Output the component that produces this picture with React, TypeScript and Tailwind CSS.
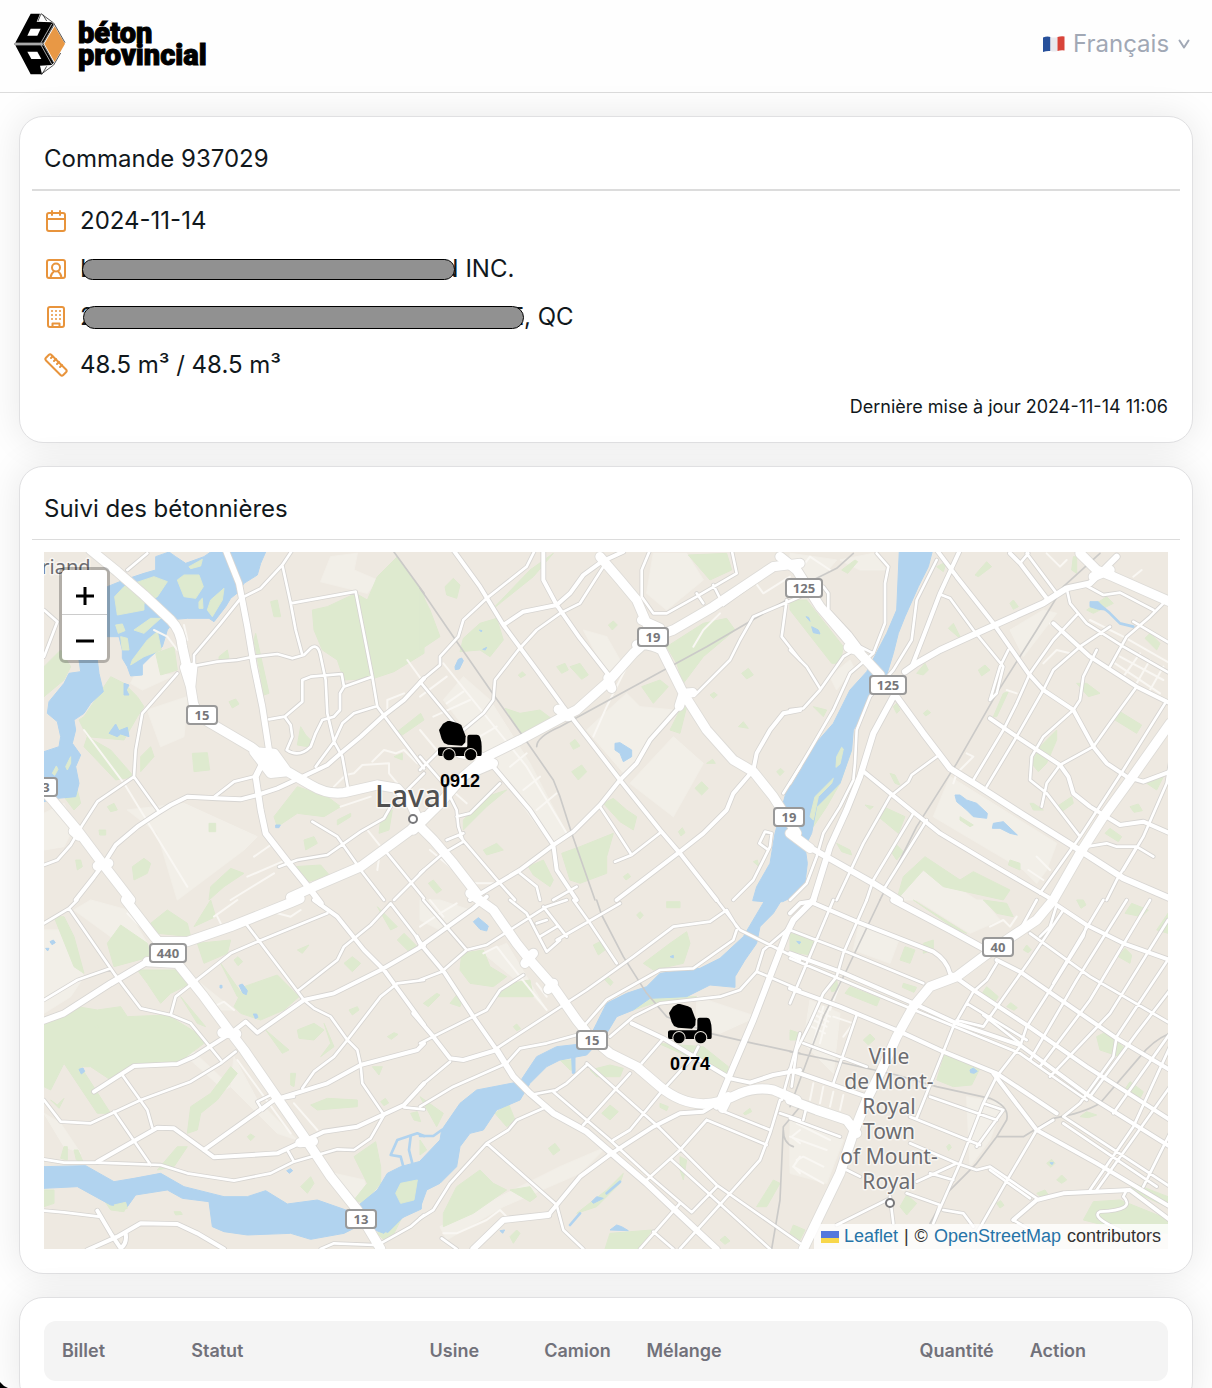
import React from "react";

type Tile = {
  at: string;
  light?: string;
  green: string;
  water?: string;
  islands?: string;
  creek?: string;
  rail?: string;
  minor?: string;
  street: string;
  avenue: string;
  primary?: string;
  motorway?: string;
};

const tiles: Tile[] = [
  {
    at: "translate(44 550) scale(0.33333)",
    light:
      "M310 480L430 440L420 560L350 590Z M250 780L420 760L640 860L600 900L400 1050L340 850Z M860 20L940 10L930 60L1000 90L970 130L830 95Z M0 790L60 760L90 830L60 890L0 900Z M300 320L340 310L350 375L400 372L295 420L260 400Z",
    green:
      "M805 180L850 170L935 130L970 150L1000 80L1060 20L1140 130L1140 310L1050 365L990 385L900 390L880 330L835 300L810 240Z M120 500L160 440L200 380L240 400L280 440L300 470L280 500L240 570L130 560L105 510Z M130 560L200 600L270 680L215 690L120 590Z M445 610L490 608L497 660L450 665Z M690 800L760 710L850 740L890 770L840 800L760 790L700 830Z M495 1050L500 1010L560 955L600 970L540 1010Z M265 950L300 925L320 940L310 970L270 990Z M750 950L830 945L860 980L790 995Z M60 740l40-20 10 40-20 20z M290 620l30-30 10 30-40 45z M1060 545L1130 490L1140 510L1075 555Z M495 820h20v25h-20z M335 310L390 290L400 360L350 375Z M635 250L675 430L660 435L630 270Z M680 155L700 150L710 200L690 200Z M555 455l20-8 10 15-20 12z M525 320l25-20 5 25-30 5z M1010 810l35-30-10 60-30 10z M880 810L920 790L920 800L880 825Z M190 770l20-10 10 20-20 5z M0 350L50 300L80 350L60 390L0 440Z M770 530l15 25 20 20-15 15-30-5z M165 840l20 0 0 15-18 0z M95 930l15 0 5 20-15 10z M1050 620l25-10 0 20z M780 870l30-10 10 20-35 20z",
    water:
      "M190 110L240 90L300 70L335 60L335 20L375 6L395 20L425 40L480 20L500 6L665 6L650 40L640 75L600 100L585 125L560 145L545 170L510 215L495 205L430 205L395 208L370 240L355 290L320 320L295 345L295 375L260 378L250 350L235 325L235 300L225 260L190 260Z M105 330L160 330L165 370L178 425L140 460L120 490L90 510L95 540L85 580L110 615L95 650L105 700L95 740L40 745L0 755L0 605L45 590L50 560L40 515L10 490L15 455L60 400L75 370L110 365Z M195 550l20-28 10 20 25-10 5 28-25-8-10 8z M240 400l15 5-8 15 8 15-15 0z M695 825l14 0-4 8-10 0z",
    islands:
      "M400 90L420 75L465 75L478 110L455 145L420 140Z M435 50l40-22-5 20-30 8z M490 180L500 150L540 115L535 150L505 200Z M240 110L330 80L370 95L340 140L300 160L300 180L220 195L212 140Z M270 240L320 205L350 205L300 250Z M230 260l20 5 5 35-20 0z M265 330L310 270L340 245L352 300L300 320L260 345Z M215 225l20-3 8 20-20 8z M65 650l15-30 0 20-10 20z M465 155l10-10 2 30-12 0z M25 670l12-22 5 10-10 18z",
    rail: "M1050 6L1140 130",
    minor:
      "M120 540L240 700L430 1010 M630 920L680 885 M610 980L715 935 M560 1050L690 970 M970 840L1010 890L1000 960 M1030 480L1030 450L1080 430 M1090 330L1130 385 M870 710L905 675L930 670L955 645L1035 640L1035 670L1060 700 M985 635L1020 600L1055 610L1080 600L1120 640 M890 770L980 740 M420 225L430 270 M330 240L370 260L400 300",
    street:
      "M745 0L715 45L650 115L590 145L530 220L450 315L450 350 M450 348L520 335L580 330L630 320L700 312L745 325L780 315L800 295Q820 280 828 310L845 390L850 490L870 575L895 620L912 715 M715 45L740 160L755 240L775 315 M740 160L935 125L985 380L1000 470L1060 550L1140 655 M985 380L900 410L888 430L888 480L870 500L835 510L815 550L800 590Q765 625 728 600L745 560L740 525L722 500L675 508 M722 500L775 455L775 390L800 380L893 372L900 410 M1000 468L930 490L895 520L870 575L815 650 M400 370L295 490L275 600L270 680L160 755L115 825L80 885L40 930L0 945 M270 680L345 785 M512 740L570 695L630 680 M705 950L760 930L850 915L900 880L950 845L1020 805L1040 770 M805 815L880 860L940 945 M950 960L1020 1050 M1030 910L1140 1045 M1140 960L1050 1050 M0 180L40 215L0 320 M250 60L310 10 M1140 670L1090 720",
    avenue:
      "M1140 385L1080 450L1015 500L950 560L890 610L850 645L765 685L700 715L640 735L590 748L520 745L430 740L380 765L340 790L280 830L215 885L180 940L150 980L95 1050",
    primary:
      "M545 0L585 100L610 230L630 350L655 470L675 600L635 680L650 780L665 850L735 940L800 1020L830 1060",
    motorway:
      "M140 0L220 65L300 135L380 210Q410 240 415 290L435 380L448 460Q460 500 500 520L620 590L670 630L740 670L800 705Q850 735 900 728L1000 705L1060 715L1100 760L1128 820 M630 605L680 670L730 665L690 610Z M422 352L440 410L446 352 M-30 690L20 745L100 840L175 940L260 1050 M88 844L104 858 M160 948L194 940 M740 1042L810 1010L950 950L1100 840L1140 800",
  },
  {
    at: "translate(420 550) scale(0.33333)",
    light:
      "M700 10L800 10L850 90L740 180L680 130Z M500 540L620 430L660 470L760 480L620 680Z M630 700L760 560L850 640L760 800Z M490 240L560 260L600 330L560 370Z M130 380L210 450L330 640L440 850L390 880L200 620L70 450Z",
    green:
      "M0 120L30 180L60 260L0 300Z M75 110l25-25 20 20-10 40-30-10z M130 265L180 220L230 205L250 270L210 320L180 300L120 305Z M255 475L300 490L360 480L400 510L310 560Z M410 350l25-10 10 20-20 10z M450 350L480 340L505 375L485 388Z M740 290L850 220L920 205L945 240L850 320L790 400L770 340Z M665 410L720 390L745 410L700 460Z M805 15L920 10L935 60L870 90Z M750 540l30-60 20-10-20 80z M550 760L580 745L620 780L650 800L640 840L600 815Z M425 910L480 890L580 850L560 920L560 970L480 1000L450 990Z M325 950L370 930L400 990L390 1010L340 975Z M190 900l40-20 20 20-50 15z M130 810L200 740L260 720L200 770L130 840Z M455 665l30-20 15 20-25 25z M825 715l20-20 20 20-20 20z M965 370l20-15 15 20-20 12z M955 530l15-15 15 20z M215 180L330 60L400 10L340 80Z M450 580l15-12 15 20-20 10z M25 1000l15-10 25 30-15 10z M565 225l15-12 12 12-15 15z M870 435l12-8 10 8-12 10z M1070 665l12-10 10 10-12 12z M775 845l12-12 8 15-12 10z M295 375l12-10 10 10-15 8z M860 640l18-12 8 12z M610 980l14-10 8 10-14 10z M1000 935l12-5 5 20z",
    water:
      "M105 350l10-22 10-4 5 8-12 25-12 2z M585 580L600 578L635 600L635 620L610 635L600 610L585 600Z M178 240l8 2-2 4z M188 298l12-6-4 8z",
    rail: "M0 115L100 260L225 440L310 560L400 690L420 740L455 850L525 1050 M350 590Q350 560 420 530L860 290L1100 150",
    minor:
      "M70 340L320 650L440 850 M80 460L130 425 M40 500L150 450 M0 540L50 600 M270 650L320 610 M310 720L360 680 M350 780L410 730 M520 560L560 470L620 350 M30 900L150 1000L220 1000 M0 440L80 380 M110 600L230 530 M1000 90L1030 130L1110 80 M60 690L140 760 M820 290L850 240L900 190",
    street:
      "M345 0L320 50L200 145L130 210L115 260L60 320L60 345L0 395L120 540 M550 50L480 160L420 190L350 240L295 300L225 390L220 450L190 490L130 540 M0 660L60 600 M690 0L665 60L665 140L700 190L740 190L830 140L950 70L935 0 M1100 150L1085 260L1140 330 M540 770L580 830L635 915L725 845 M635 915L585 935 M300 970L350 1010L360 1050 M0 970L70 910L130 875L115 830L110 780L70 700L0 620 M120 860L240 1000L285 1050 M110 800L150 790L240 700 M80 870L130 850 M1140 650L1090 730 M940 1050L1000 990L1050 890L1055 850L1035 845L1018 880L1045 900 M400 1050L470 1010 M830 130L850 160 M880 105L910 165L1000 100 M830 430L930 330L960 270L1000 200L1140 140",
    avenue:
      "M100 0L180 110L250 225L350 360L430 470L500 560L600 690L720 840L780 910L890 1050 M370 0L370 90L410 165L480 265L570 380 M250 225L310 185L410 165L450 130L490 75L545 35L610 5 M1140 480L1090 490L1050 540L1010 610L1000 660L940 730L920 780L850 850L780 905L590 1050 M220 650L330 780L400 885L410 960L470 1050 M150 1050L300 960L400 885L460 845L540 765L600 690L650 640L690 570L770 480",
    motorway:
      "M-20 840L60 760L130 680L200 620L300 570L430 500L470 480L560 400L640 310L690 265L760 240L880 170L1060 50L1140 40 M120 610L180 620L220 640L150 670 M650 285Q690 280 725 300 M665 210L720 235 M540 20L600 90L650 150L680 220L720 290L790 430L860 540L940 630L1000 665L1060 740L1130 850 M778 468L790 430L818 428 M564 384L575 415 M415 478L445 500 M0 830L40 870L100 940L170 1030",
  },
  {
    at: "translate(790 550) scale(0.33333)",
    light:
      "M480 680L800 880L770 960L740 1000L700 960L430 800Z M350 980L420 960L560 1050L330 1050Z M660 240L760 180L800 190L700 320Z M0 10L140 30L80 100L0 50Z M150 30L250 10L290 60L210 60Z M120 380L180 330L190 350L140 420Z",
    green:
      "M0 150L50 150L160 290L150 340L125 340L0 180Z M555 75L590 35L605 50L565 80Z M475 235L490 220L515 270Z M565 360l20-15 15 15-25 18z M975 510L990 485L1055 525L1040 550Z M860 400L890 400L930 430L895 440Z M750 590L800 540L800 570L770 640L745 665L725 640Z M265 800L280 770L345 800L325 850Z M800 770L845 740L850 760L815 785Z M945 850L960 835L995 860L985 875Z M320 1050L340 980L405 920L510 990L550 965L660 1020L640 1050L460 1010L400 960Z M185 600L150 700L110 770L70 830L60 760L110 700L150 680Z M890 180l60-40 20 20-60 30z M1065 265L1080 250L1110 280L1100 300Z M660 930l30 10 0 20-35-15z M70 470L110 480L100 500Z M440 50l30-15-10 30z M380 370l25-30 10 20-15 15z M610 500L640 430L655 425L620 500Z M510 800l40 25-10 5-30-20z M300 900l20-15 20 20-20 25z M140 880l40 20 5 15-30-10z M1070 700l50-20-20 40z M660 160l10-10 15 20-15 8z M400 490l12-10 10 8-15 10z M300 670l15 5 15 30-15-5z M850 20l10 0 0 50-15-10z M155 60l40-30 8 5-30 35z M720 760l10 0 30 20-30 0z M225 765l25 5-10 8z M310 470l10-10 10 20-10 10z M1020 770l25-8 12 20-25 5z",
    water:
      "M328 0L428 0L415 50L385 110L345 200L325 250L310 310L290 375L245 430L220 490L190 540L185 600L150 700L110 740L80 770L65 850L45 890L52 940L45 1000L20 1035L-22 1055L-80 1055L-112 1052L-100 1010L-60 940L-45 850L-10 720L60 600L130 520L180 420L230 365L290 250L320 180Z M495 735L510 735L530 750L560 760L592 790L590 805L550 800L530 780L500 755Z M610 820L640 815L682 855L660 850L630 835L607 835Z M900 155l25 0 20 25-20-2-25-8z M65 230l20 10 5 12-20-4z M48 200l8 2 4 12z",
    islands: "M140 620l15-28 5 5-10 45-12 10z M60 800L75 740L130 685L125 700L85 740L70 810Z",
    creek: "M930 165L960 190L990 220L1030 230",
    rail: "M930 10L820 110L740 240L620 430L500 640L380 830L270 1050 M50 100L140 55L190 10",
    minor:
      "M780 220L820 250 M760 340L800 300L840 310 M490 700L500 670L550 620L530 610 M900 210L1000 260L1140 340 M990 320L1120 390 M975 340L1110 430 M1000 380L1050 310 M1040 400L1080 330 M1080 420L1120 350 M715 960L760 990 M740 920L780 960 M30 60L60 20L120 60 M1030 80L1055 60 M770 10L810 50L830 30 M650 420L680 430",
    street:
      "M455 135L480 145L550 240L640 350L620 430L600 450 M260 10L295 50L285 100L285 220L250 310L180 370L130 480L60 600L0 700 M440 30L380 150L365 270L310 360L240 440L200 540L195 640L190 690L150 770L100 850L80 920L50 1000L0 1050 M300 740L355 695L365 675L440 620 M0 480L40 475L90 420L160 320L210 290L250 310 M0 300L50 350L90 415 M100 110L115 130L115 180L180 250L210 290 M860 195L790 270L720 370L680 460L640 540L550 690 M960 230L870 290L790 360L760 420L680 560L590 710 M920 300L880 380L870 450L850 480L760 560L725 620L720 690L770 730L870 860 M910 590L810 645L770 700L755 770 M830 115L840 160L890 220L1000 290L1140 370 M1140 140L1080 200L1010 260L960 350 M885 105L940 135L990 128L1090 180 M1030 215L1140 280 M1040 410L960 520L910 590 M1125 460L1000 660L870 860L750 1030 M1140 640L1130 700L1060 860L1000 960 M890 890L950 880L980 890L1040 890L1090 920 M370 790L250 990L230 1050 M410 810L280 1020 M300 740L220 880L140 1050 M710 10L800 130 M655 300L630 350L600 450 M1040 890L980 990L950 1050 M690 40L715 10",
    avenue:
      "M440 0L500 80L610 220L715 370L760 420L850 480L910 590L950 640L1010 680L1060 695L1140 665 M510 0L450 130L400 260L365 350 M660 10L690 40L770 145 M215 660L350 770L450 850L600 940L780 1045 M790 220L900 320L1040 410L1140 460 M600 505L680 560L810 645L835 680L850 730L900 770L990 825L1060 815L1140 850",
    primary:
      "M320 440L400 550L480 655L560 705L700 795L860 895L1000 985L1140 1045 M345 365L380 340L450 300L570 245L760 160L830 115L900 100L980 20 M310 440L250 550L210 680L170 780L120 890L70 1050 M20 870L100 915L250 1000L330 1050",
    motorway:
      "M-30 20L20 60L90 170L200 300L270 375 M175 292L210 305 M0 850L60 895 M870 10L920 60L970 80L1060 120L1140 155 M910 80L960 60 M1140 520L1020 690L940 800L870 910L790 1050",
  },
  {
    at: "translate(44 900) scale(0.33333)",
    light:
      "M0 90L60 90L120 230L80 290L0 340Z M90 30L140 0L250 30L310 130L240 90L200 110Z M290 430L350 480L300 480Z M380 390L560 560L540 570L350 400Z M570 470L640 600L760 720L700 700L560 560Z M870 820L960 840L970 880L920 900Z M470 250L570 330L520 330Z M0 640L50 670L110 760L60 740Z",
    green:
      "M0 370L100 320L160 330L230 320L250 350L370 345L460 400L480 430L400 490L280 490L200 540L140 500L110 500L200 640L160 640L60 490L20 570L0 560Z M570 320L600 260L700 225L765 290L720 330L650 360L590 340Z M190 130L230 75L310 130L320 170L210 200Z M320 70L370 30L430 70L440 110L340 100Z M500 0L515 50L450 80Z M30 50L60 50L90 110L120 220L90 200Z M430 700L440 620L500 580L560 500L580 520L520 600L470 640L460 690Z M800 615L850 595L940 600L940 620L820 630Z M930 900L970 850L930 770L995 725L1010 800L1010 850L960 910Z M280 210L430 210L440 250L380 280L350 310L310 250Z M410 290L485 380L460 370Z M480 190L460 130L560 120L550 160Z M530 190L600 290L580 290Z M900 190l25-20 25 20-25 25z M1000 20L1060 80L1040 90Z M760 390l50-20 30 20-30 30-45-5z M665 390L735 450L715 460Z M985 500l30 0-10 25z M0 870L30 870L30 910L0 920Z M180 900L250 910L240 935L200 930Z M340 810L400 740L430 740L390 800Z M1000 1000L1030 960L1080 940L1050 1000L1020 1020Z M840 370L870 440L830 470L860 430Z M60 740l10 0 0 40-20-5z M1060 120l20-20 40 40-20 20z M570 180l12-10 14 15-14 12z M760 150l35-15-20 25z M740 520l15 0-5 40-10-5z M1030 410l20-12 12 5-20 15z M915 330l25-10 5 10-20 15z M1010 605l14-10 10 14-14 8z M1100 640l20-5 10 30-20-5z M610 710l10-8 12 8-12 12z M770 860l30-30 10 20-20 30z M90 750l12 0 15 35-20-5z M20 600l20 15 20-20-15 30z M390 935l20 0 5 8-20 2z",
    water:
      "M0 800L125 797L210 845L270 835L350 820L420 860L540 890L610 890L665 872L730 912L820 900L920 935L1000 870L1030 820L1070 800L1132 783L1132 927L1060 960L1020 1000L950 975L900 1000L800 1018L740 1000L610 1005L540 995L505 980L495 905L415 895L370 870L275 885L250 920L200 915L100 860L0 865Z M585 256l10-4 15 20-3 12-10-4z M105 508l12-4 5 10-10 8z M628 342l10 0 4 10-8 4z M18 125l10-5 6 8-10 6z M728 812l12-6 6 6-10 8z M528 256l6 0 0 8-6 0z M5 145l10 0-4 8z",
    islands: "M1055 880L1070 850L1120 840L1110 900L1070 910Z M210 915l35-8 5 18-25 8z M150 380l8-5 8 6-8 6z",
    creek: "M1078 800L1070 770L1040 765L1060 720L1120 700L1140 708 M1105 790L1095 750L1100 710 M1030 995L1060 965L1080 945",
    minor:
      "M510 50L580 0 M520 50L530 70 M510 320L540 305L570 330 M700 40L740 50L770 30 M750 610L820 690 M580 480L740 700 M250 40L330 120",
    street:
      "M0 70L75 25L100 0 M75 25L210 220L290 325L380 345L440 370L530 480 M0 300L100 240L200 205 M380 345L395 290L560 160L640 125L850 40 M605 70L780 300L810 325L860 350L910 420L940 450L950 495L955 550L1020 645L980 715L930 750L880 748L750 785L680 820L570 842L430 820L350 795L160 788L60 788L0 778 M765 270L880 180L900 140L980 75L1040 10L1140 140 M0 600L50 665L140 670L290 600L440 545L530 490L575 455 M235 525L310 630L325 683 M210 635L320 795 M1140 240L1060 250L1010 290L910 420L870 470L810 515L775 565 M730 750L750 785 M0 932L60 937L165 950 M690 580L640 605L655 630L690 600L750 590 M1080 622L1140 628 M830 1047L870 1030L990 1035 M1010 1030L1100 980L1140 945",
    avenue:
      "M150 575L270 498L400 492L450 470L560 400L605 365L640 398L780 300L870 280L1010 210L1140 135 M810 0L880 50L960 150L1020 210L1060 265L1140 375 M160 785L340 683L390 685L480 750L510 772L700 760L840 695L940 680L1080 615L1140 550 M480 750L690 600L850 550L950 495L1120 450L1140 430 M160 932L200 1000L230 1045Q250 1030 245 1000 M130 1050L220 1010L290 970L400 972L460 1000L540 1047",
    primary: "M0 362L60 340L200 250L310 185",
    motorway:
      "M245 0L330 110L400 190L480 290L550 385L600 450L690 580L780 710L860 830L940 930L1010 1047 M340 125L430 125L560 80L740 8L768 -4 M310 185L400 190 M534 398L578 402 M768 728L808 724",
  },
  {
    at: "translate(420 900) scale(0.33333)",
    light:
      "M830 290L1010 350L900 400L830 380Z M60 980L420 800L560 740L480 820L250 920L80 1020Z M0 0L60 0L150 30L60 90L0 60Z M190 160L260 130L380 330L300 250Z M1110 700L1140 680L1140 800L1110 800Z",
    green:
      "M120 210L125 160L190 150L210 200L260 230L220 260L150 250Z M230 290L270 250L330 240L340 290Z M670 190L750 130L800 95L810 130L790 190L700 210Z M70 940L110 860L180 810L220 850L260 870L160 940L70 980Z M555 1047L570 1000L695 990L660 1047Z M545 640L570 615L595 635L570 660Z M510 510L570 495L610 505L600 530L530 530Z M715 430L850 440L925 500L920 520L760 450Z M520 135l20-10 15 25-20 15z M0 590L70 640L50 680Z M225 640l40-30 20 50-25 20z M385 745l20-15 15 20-20 15z M470 940L560 870L610 820L600 850L530 920Z M1010 920L1060 840L1080 850L1040 920Z M10 310l40-30 10 5-35 35z M90 310l20-25 20 10-10 25z M270 870l60-10 20 30-20 15z M640 330L700 290L830 290L700 310Z M780 770l20 10-10 60-10-30z M740 5l40 0 0 18-40 0z M650 45l10-10 10 10-10 12z M555 240l10-8 14 15-8 10z M970 640l20-15 5 10-20 10z M0 720l20 30-20 15z M280 380l10-8 12 14-12 6z M900 1020l15-12 15 15-15 10z M420 480l40 0 5 30-15 0z M1110 390l30 10 0 20-25-10z M720 610l25 10-5 12-20-10z M270 1010l20-20 10 10-20 30z",
    water:
      "M1035 0L1085 0L1060 40L1020 80L1010 130L975 180L945 230L945 262L870 255L800 290L690 295L640 330L590 350L560 400L500 465L420 480L380 500L330 550L300 600L230 630L190 690L150 700L120 740L110 800L60 850L20 870L0 925L0 783L60 720L65 690L120 610L170 570L300 545L350 470L410 440L500 430L530 370L560 310L620 280L680 260L720 220L840 205L900 175L970 110Z M160 65l15-12 30 25-5 15-20-5z M515 905l15-15 20 5-30 15z M570 990l20-15 15 5 20 12z M455 470l10 0 0 50-8 0z M240 992l14-2-6 10z M750 170l10-4 0 8z",
    creek: "M0 708L40 708L65 690 M450 975L480 940 M560 880L600 845",
    rail: "M530 0L545 45L610 170L680 280L740 350L870 400L1000 430L1140 460 M1140 620L1090 680L1080 900L1055 1047 M1090 690Q1090 730 1120 740",
    minor:
      "M0 80L60 40L110 10 M30 0L70 50 M190 160L230 140L300 230L380 330 M70 1000L110 1000L200 960L240 930L260 950 M350 250L380 290 M1140 690L1115 710L1140 730 M1140 770L1120 800L1140 820",
    street:
      "M0 560L90 485 M0 620L100 560L260 490L300 445L380 430L470 405 M0 240L65 215L140 150L200 135L270 90L380 20L440 0 M10 0L140 150 M0 430L40 410L160 350L200 330L240 270L310 225 M230 445L430 315L500 270L640 170L760 80L870 65L920 30L950 80 M460 0L510 70L590 190 M410 120L600 10 M270 0L320 40L380 155L420 120 M370 20L440 110 M350 70L380 60 M360 110L410 80 M490 380L560 300L720 210L820 205L940 120L950 90 M570 410L640 350L720 310L900 290L960 270L1010 215L1030 150L1100 90 M730 415L665 490 M835 440L820 470L720 580L630 690L580 720 M500 490L720 685L890 855L1140 1030 M500 495L440 550L400 575L570 720L690 830L815 937L890 860 M630 520L490 675 M370 625L290 660L265 690L200 730L90 850L40 930L0 955 M200 730L410 915L430 990L490 1047 M890 0L960 90L1140 180 M1010 215L1140 270 M860 660L1040 735 M900 630L1050 690 M860 660L780 750L680 840 M755 780L1050 1047 M780 910L660 1047 M700 995L760 1047 M65 1015L110 1047 M410 570L330 585 M1080 600L1050 700L1020 780L930 880L780 1047 M1085 600L1140 400 M1140 660L1080 640",
    avenue:
      "M-10 110L0 130L75 220L160 350L230 450 M-20 340L40 410L90 475L130 480L230 450 M0 140L160 25L200 -10 M635 370L730 415L930 535L990 548L1060 525L1140 510 M160 1047L250 960L385 945L410 915L480 830L575 760L700 680L780 640L850 635L890 610",
    primary:
      "M230 450L280 530L330 580L400 640L500 695L575 760L680 850L770 935L890 1047 M160 1047L250 960L385 945 M1180 0L1120 60L1100 100L1050 230L1000 360L940 500L890 620",
    motorway:
      "M150 -20L220 30L290 130L330 180L400 260L470 360L510 410L570 460L650 500L720 560Q780 610 850 612Q900 610 960 580Q1010 560 1060 570L1130 600 M315 190L340 160 M384 268L400 250 M908 625L925 590",
  },
  {
    at: "translate(790 900) scale(0.33333)",
    light:
      "M380 0L580 0L630 60L540 100Z M530 590L640 610L600 720L540 800Z M60 300L150 340L130 520L40 430Z M0 660L160 720L110 850L0 820Z M210 60L330 110L300 190L190 150Z",
    green:
      "M440 540L465 460L570 505L545 555L490 560Z M0 100L75 120L60 165L0 155Z M165 280L180 260L270 295L260 318Z M330 180L345 140L375 150L360 190Z M920 410L950 395L1010 450L990 470L930 450Z M1000 575L1020 545L1060 575L1045 605Z M880 960L910 905L990 900L1140 960L1134 1000L1000 990Z M1030 850L1134 890L1130 920L1020 870Z M580 0L650 10L670 50L620 40Z M400 130l30-10 0 30-30 10z M570 290L590 260L625 290L615 305Z M985 170l20-25 20 20-5 25z M1005 40l20-30 50 20-20 20z M0 1000L10 975L45 990L30 1020Z M330 920L350 885L380 910L350 945Z M370 0L530 100L500 90Z M220 420l20-18 15 15-20 18z M1100 90l34-50 0 60z M0 395l25 5 5 20-30 0z M770 790l15-12 10 12-12 12z M800 840l15-15 15 15-15 10z M340 250l40 12-8 15-35-15z M650 320l12-12 20 15-10 8z M870 650l20-15 30 10-25 8z M120 260l20-20 5 30-20 5z M700 150l10-15 14 15-10 8z M470 740l8-8 6 10-8 10z M620 910l12-8 10 14-12 8z M740 880l25-10 10 15-20 8z M860 0l20 0 8 15-15 10z",
    water: "M540 510l10-6 12 10-10 6-10-2z M20 124l12 2-4 6z M780 788l10 0-4 6z",
    rail: "M0 455L120 480L320 525L440 560L600 595Q660 620 650 660L620 710L560 790L470 880L420 970 M1140 400Q1090 420 1050 470L930 610Q880 640 790 655L700 710L620 710 M270 0L170 210L100 350L0 620",
    minor:
      "M80 330L120 350 M75 345L115 365 M70 360L110 380 M65 380L105 400 M100 320L70 430 M120 310L90 430 M150 250L120 330 M70 550L60 600 M100 560L90 610 M130 575L120 620 M160 585L150 630 M20 670L120 720 M0 710L110 750 M10 800L100 850 M20 780L40 770L100 800 M600 80L640 60L660 80L680 50 M130 350L190 370L160 410",
    street:
      "M0 175L360 325L690 460L890 600 M230 0L160 160L140 230L100 280L60 370L20 450L5 560 M130 0L0 310 M620 190L590 240L550 275L490 380L460 455L380 655 M740 0L690 90 M820 30L720 180L600 350L580 380 M890 75L880 110L780 270L710 380L690 440L620 530L580 610L510 790L430 970 M940 0L790 250 M1010 0L860 240L720 480 M1080 0L900 300L750 500 M1134 60L960 340L780 530 M1140 170L980 410L970 470L870 610L820 650 M1140 270L1040 400L900 590 M790 660L740 690L640 860L560 1000 M1140 400L970 640 M1140 440L1030 680L900 870 M1140 560L920 870 M1140 700L1060 860 M820 650L1140 860 M820 670L1100 860 M200 345L130 550 M170 810L210 830 M300 890L310 970 M140 975L300 895 M350 880L450 915L430 970 M500 790L380 845 M360 730L500 790L560 810L600 800L740 895 M600 810L720 895 M420 590L620 660 M360 650L570 735 M580 610L640 630L560 740 M40 430L230 500 M0 655L150 710 M40 660L50 620 M1010 870L1000 890Q1040 930 930 935Q900 950 990 990 M460 930L520 940L550 980 M670 960L720 990 M0 90L170 155L400 250 M500 360L580 380 M580 345L690 430 M530 310L710 420 M720 100L900 230L1140 370 M800 15L780 80L750 110 M420 820L490 840",
    avenue:
      "M0 40L30 10L60 5L200 65L430 155Q470 180 480 220 M0 265L150 320L330 395L460 455L620 520L800 640 M0 160L150 215L370 310L500 370L690 435L900 590L1140 740 M800 15L890 75L1000 130L1140 180 M480 220L550 270L710 375L890 500L1140 660 M620 180L690 215L820 305L980 415L1140 510 M610 520L740 690L920 790L1140 920 M0 510L230 590 M670 960L740 900L820 880L1020 870L1140 960",
    primary: "M310 0L480 90L580 145",
    motorway:
      "M790 0L740 60L650 120L580 170L500 230L420 260L370 320L320 410L275 510L230 600L190 700L150 820L40 1047 M0 600L80 630L170 660L200 700",
  },
];

const shields = [
  { x: 202, y: 715, w: 30, n: "15" },
  { x: 653, y: 637, w: 30, n: "19" },
  { x: 804, y: 588, w: 36, n: "125" },
  { x: 888, y: 685, w: 36, n: "125" },
  { x: 789, y: 817, w: 30, n: "19" },
  { x: 168, y: 953, w: 36, n: "440" },
  { x: 592, y: 1040, w: 30, n: "15" },
  { x: 361, y: 1219, w: 30, n: "13" },
  { x: 998, y: 947, w: 30, n: "40" },
  { x: 46, y: 787, w: 22, n: "3" },
];

const town = ["Ville", "de Mont-", "Royal", "Town", "of Mount-", "Royal"];

function Roads({ kind, color, width }: { kind: keyof Tile; color: string; width: number }) {
  return (
    <g fill="none" stroke={color} strokeWidth={width} strokeLinecap="round" strokeLinejoin="round">
      {tiles.map((t) => t[kind] && <path key={t.at} transform={t.at} d={t[kind]} />)}
    </g>
  );
}

function Areas({ kind, color }: { kind: keyof Tile; color: string }) {
  return (
    <g fill={color} stroke={color} strokeWidth="3" strokeLinejoin="round">
      {tiles.map((t) => t[kind] && <path key={t.at} transform={t.at} d={t[kind]} />)}
    </g>
  );
}

function Truck({ x, y, label }: { x: number; y: number; label: string }) {
  return (
    <g transform={`translate(${x} ${y})`}>
      <g transform="scale(0.33333)">
        <path d="M3 27L15 8L29 0L36 0L60 7L70 12L83 46L82 64L72 74L30 71L18 66L11 54Z" />
        <path d="M88 74V48Q88 41 95 41H116Q124 41 127 51Q131 62 131 76V100Q131 105 127 105H6Q0 105 0 99V86Q0 79 8 79H84Q88 79 88 74Z" />
        <circle cx="33" cy="101" r="20" fill="#e9e5dd" />
        <circle cx="98" cy="101" r="20" fill="#e9e5dd" />
        <circle cx="33" cy="101" r="17" />
        <circle cx="98" cy="101" r="17" />
      </g>
      <text x="22" y="66" textAnchor="middle" className="text-[18px] font-bold" fontFamily="Liberation Sans, sans-serif">
        {label}
      </text>
    </g>
  );
}

function MapView() {
  return (
    <svg
      viewBox="44 552 1124 697"
      preserveAspectRatio="xMidYMid slice"
      className="block size-full"
      role="img"
      aria-label="Carte des bétonnières"
    >
      <rect x="0" y="500" width="1300" height="800" fill="#eee9e1" />
      <Areas kind="light" color="#f2efe8" />
      <Areas kind="green" color="#deeacf" />
      <Areas kind="water" color="#b1d3ef" />
      <Roads kind="creek" color="#b1d3ef" width={8} />
      <Areas kind="islands" color="#deeacf" />
      <Roads kind="minor" color="#f9f7f3" width={6} />
      <Roads kind="street" color="#d6d4d1" width={13} />
      <Roads kind="avenue" color="#d6d4d1" width={17} />
      <Roads kind="primary" color="#d8d6d3" width={23} />
      <Roads kind="motorway" color="#dddbd7" width={33} />
      <Roads kind="rail" color="#cbcac8" width={5} />
      <Roads kind="street" color="#ffffff" width={8} />
      <Roads kind="avenue" color="#ffffff" width={12} />
      <Roads kind="primary" color="#ffffff" width={18} />
      <Roads kind="motorway" color="#ffffff" width={28} />
      <g
        fontFamily="Noto Sans, sans-serif"
        textAnchor="middle"
        stroke="#ffffff"
        strokeOpacity="0.6"
        strokeWidth="3"
        strokeLinejoin="round"
        paintOrder="stroke"
      >
        <text x="66" y="574" fill="#6c6c70" className="text-[20px]">
          riand
        </text>
        <text x="412" y="807" fill="#505050" className="text-[30px] font-medium">
          Laval
        </text>
        {town.map((line, i) => (
          <text key={i} x="889" y={1064 + i * 25} fill="#6c6c70" className="text-[21px]">
            {line}
          </text>
        ))}
      </g>
      <g fill="#ffffff" stroke="#77777a" strokeWidth="2">
        <circle cx="413" cy="819" r="4" />
        <circle cx="890" cy="1203" r="4" />
      </g>
      {shields.map((s) => (
        <g key={`${s.x}-${s.y}`}>
          <rect x={s.x - s.w / 2} y={s.y - 9} width={s.w} height="18" rx="3" fill="#fff" stroke="#999" strokeWidth="2" />
          <text
            x={s.x}
            y={s.y + 5}
            textAnchor="middle"
            fill="#77777a"
            fontFamily="Noto Sans, sans-serif"
            className="text-[13px] font-bold"
          >
            {s.n}
          </text>
        </g>
      ))}
      <Truck x={438} y={721} label="0912" />
      <Truck x={668} y={1004} label="0774" />
    </svg>
  );
}

function Icon({ children }: { children: React.ReactNode }) {
  return (
    <svg
      viewBox="0 0 24 24"
      className="size-6 shrink-0 fill-none stroke-[#e8943c] stroke-2"
      strokeLinecap="round"
      strokeLinejoin="round"
      aria-hidden="true"
    >
      {children}
    </svg>
  );
}

function Logo() {
  return (
    <a href="#" className="flex items-center gap-3 text-black" aria-label="béton provincial">
      <svg viewBox="0 0 156 186" className="h-[62px] w-[52px]" aria-hidden="true">
        <path d="M50 2H78L68 26L112 28L119 34L88 89H4Z" />
        <path d="M50 47H80L70 68H40Z" fill="#fff" />
        <path d="M4 97H88L119 150L112 156L78 158L84 184H50Z" />
        <path d="M40 116H70L82 138H52Z" fill="#fff" />
        <path d="M122 40L153 92L122 147L91 92Z" fill="#e89845" />
        <path
          d="M81 2L119 30L153 89 M119 37L87 92L119 150 M0 93H88 M81 2L72 24 M86 4L98 24 M81 184L119 156L140 120 M98 160L84 184"
          fill="none"
          stroke="#333"
          strokeWidth="2.5"
        />
        <path d="M113 33L81 89M113 153L81 96" fill="none" stroke="#fff" strokeWidth="2" />
      </svg>
      <span className="font-[Roboto] text-[29px] leading-[22px] font-black [-webkit-text-stroke:1px_#000]">
        béton
        <br />
        provincial
      </span>
    </a>
  );
}

const card = "rounded-3xl border border-[#e0e0e2] bg-white px-3 shadow-[0_0_36px_rgba(0,0,0,0.09)]";
const columns: [string, string][] = [
  ["Billet", "w-[11.5%]"],
  ["Statut", "w-[21.2%]"],
  ["Usine", "w-[10.2%]"],
  ["Camion", "w-[9.1%]"],
  ["Mélange", "w-[24.3%]"],
  ["Quantité", "w-[9.8%]"],
  ["Action", "w-[13.9%]"],
];

export default function App() {
  return (
    <div className="min-h-screen overflow-hidden bg-[#fefefe] font-[Inter,sans-serif] text-2xl text-[#11181c]">
      <header className="flex h-[93px] items-center justify-between border-b border-[#dcdcdc] bg-[#fefefe] px-3.5 pb-1">
        <Logo />
        <label className="flex items-center gap-2 pr-2 text-[#a1a8b5]">
          <svg viewBox="0 0 22 16" className="h-4 w-[22px]" aria-hidden="true">
            <path d="M0 1.500Q4 0 7.500 1V15Q4 14.500 0 16Z" fill="#27509b" />
            <path d="M7.500 1Q11 2 14.500 1V15Q11 16 7.500 15Z" fill="#e9e9ee" />
            <path d="M14.500 1Q18 0 21.500 .5V14.500Q18 14 14.500 15Z" fill="#d8443a" />
          </svg>
          <select aria-label="Langue" className="appearance-none bg-transparent leading-8 outline-none">
            <option>Français</option>
          </select>
          <svg
            viewBox="0 0 12 10"
            className="h-2.5 w-3 fill-none stroke-current stroke-2"
            strokeLinecap="round"
            strokeLinejoin="round"
            aria-hidden="true"
          >
            <path d="M1.500 1.500L6 8.500L10.500 1.500" />
          </svg>
        </label>
      </header>

      <main className="flex flex-col gap-[23px] px-[19px] pt-[23px]">
        <section className={card}>
          <h1 className="border-b-2 border-[#dcdcdc] px-3 pt-[26px] pb-3.5 leading-8">Commande 937029</h1>
          <ul className="px-3 pt-1.5">
            <li className="flex h-12 items-center gap-3">
              <Icon>
                <rect x="3" y="4" width="18" height="18" rx="2" />
                <path d="M8 2V6M16 2V6M3 10H21" />
              </Icon>
              2024-11-14
            </li>
            <li className="flex h-12 items-center gap-3">
              <Icon>
                <rect x="3" y="3" width="18" height="18" rx="2" />
                <circle cx="12" cy="10.500" r="4" />
                <path d="M6.500 20.500Q7 16.500 10 14.500M17.500 20.500Q17 16.500 14 14.500" />
              </Icon>
              <span className="flex items-center">
                L
                <span className="relative -ml-3 h-[21px] w-[373px] rounded-full border border-black bg-[#919191]" />
                <span className="-ml-3.5">N INC.</span>
              </span>
            </li>
            <li className="flex h-12 items-center gap-3">
              <Icon>
                <rect x="4" y="2" width="16" height="20" rx="2" />
                <path d="M8.500 22V18.500H15.500V22" />
                <path d="M8 6h.01M12 6h.01M16 6h.01M8 10h.01M12 10h.01M16 10h.01M8 14h.01M12 14h.01M16 14h.01" />
              </Icon>
              <span className="flex items-center">
                2
                <span className="relative -ml-3 h-[23px] w-[441px] rounded-full border border-black bg-[#919191]" />
                <span className="-ml-3.5">E, QC</span>
              </span>
            </li>
            <li className="flex h-12 items-center gap-3">
              <Icon>
                <path d="M22 16.500a2 2 0 0 1 0 2.800l-2.700 2.700a2 2 0 0 1-2.800 0L2 7.500a2 2 0 0 1 0-2.800L4.700 2a2 2 0 0 1 2.800 0Z" />
                <path d="M16 14l2-2M13 11l2-2M10 8l2-2M7 5l1.500-1.500" />
              </Icon>
              48.5 m³ / 48.5 m³
            </li>
          </ul>
          <p className="px-3 pt-1 pb-[21px] text-right text-lg leading-7">Dernière mise à jour 2024-11-14 11:06</p>
        </section>

        <section className={card}>
          <h2 className="border-b border-[#dcdcdc] px-3 pt-[26px] pb-3.5 leading-8">Suivi des bétonnières</h2>
          <div className="relative mx-3 mt-3 mb-6 h-[697px] overflow-hidden">
            <MapView />
            <div className="absolute top-[15px] left-[15px] flex flex-col rounded-md border-3 border-black/25 bg-clip-padding">
              <button
                type="button"
                aria-label="Zoom avant"
                className="flex h-[45px] w-[45px] items-center justify-center rounded-t-sm border-b border-[#ccc] bg-white pt-2"
              >
                <svg viewBox="0 0 18 18" className="size-[18px] stroke-black stroke-3" aria-hidden="true">
                  <path d="M0 9H18M9 0V18" />
                </svg>
              </button>
              <button
                type="button"
                aria-label="Zoom arrière"
                className="flex h-[45px] w-[45px] items-center justify-center rounded-b-sm bg-white pt-1.5"
              >
                <svg viewBox="0 0 18 18" className="size-[18px] stroke-black stroke-3" aria-hidden="true">
                  <path d="M0 9H18" />
                </svg>
              </button>
            </div>
            <p className="absolute right-0 bottom-0 flex items-center gap-1.5 bg-white/80 px-[7px] font-['Liberation_Sans',sans-serif] text-[18px] leading-[25px] text-[#333]">
              <a href="#leaflet" className="flex items-center gap-[5px] text-[#2774a8]">
                <svg viewBox="0 0 18 12" className="h-3 w-[18px]" aria-hidden="true">
                  <path fill="#5478dd" d="M0 0h18v7H0z" />
                  <path fill="#f8d74a" d="M0 7h18v5H0z" />
                </svg>
                Leaflet
              </a>
              <span>|</span>
              <span>©</span>
              <a href="#osm" className="text-[#2774a8]">
                OpenStreetMap
              </a>
              <span>contributors</span>
            </p>
          </div>
        </section>

        <section className={`${card} pt-[23px] pb-6`}>
          <div className="px-3">
            <table className="w-full table-fixed text-left text-lg text-[#71717a]">
              <thead>
                <tr className="h-[60px]">
                  {columns.map(([name, width]) => (
                    <th
                      key={name}
                      scope="col"
                      className={`${width} bg-[#f4f4f4] pl-[18px] font-semibold first:rounded-l-xl last:rounded-r-xl`}
                    >
                      {name}
                    </th>
                  ))}
                </tr>
              </thead>
            </table>
          </div>
        </section>
      </main>
      <svg viewBox="0 0 8 8" className="fixed bottom-0 left-0 size-2" aria-hidden="true">
        <path d="M0 2Q3 6 8 8H0Z" />
      </svg>
    </div>
  );
}
